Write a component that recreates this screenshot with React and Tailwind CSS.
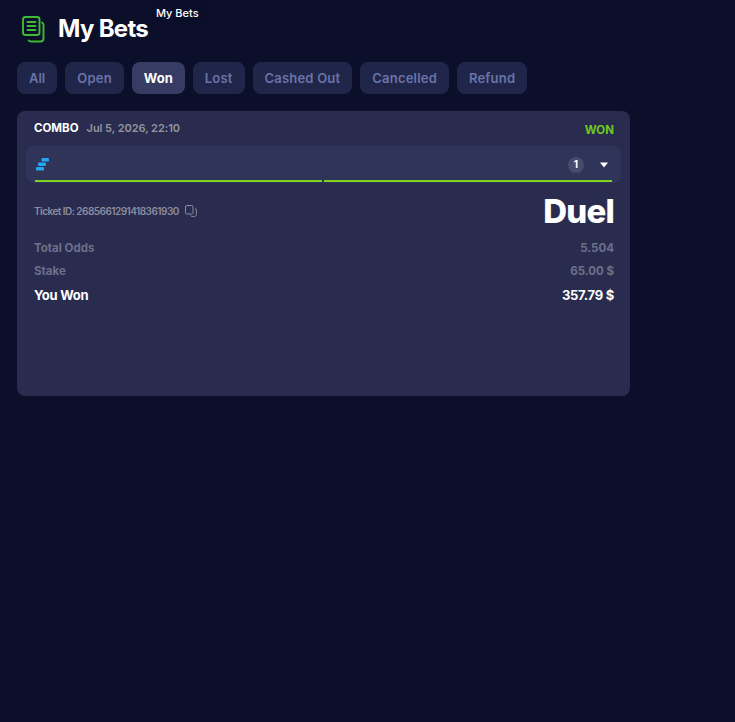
import React from "react";

const tabs = ["All", "Open", "Won", "Lost", "Cashed Out", "Cancelled", "Refund"];

function Tab({ label }) {
  const active = label === "Won";
  const all = label === "All";
  return (
    <div
      className={
        "h-8 px-3 flex items-center rounded-lg text-[13px] leading-none " +
        (active
          ? "bg-[#373c64] text-white font-bold"
          : all
          ? "bg-[#20254a] text-[#6a74a8] font-semibold"
          : "bg-[#20254a] text-[#6a74a8] font-semibold tracking-[0.2px]")
      }
    >
      {label}
    </div>
  );
}

export default function App() {
  return (
    <div className="relative min-h-[722px] bg-[#0b0f2a] pl-[17px] pt-[13px] font-['Inter',sans-serif] overflow-hidden">
      <div className="absolute left-[148px] top-0 h-[26px] w-[64px] pl-[8px] flex items-center bg-[#0a0e29] text-white text-[11px] font-medium leading-none whitespace-nowrap">
        My Bets
      </div>
      <div className="flex items-center h-8 pl-[4px] gap-[13px]">
        <svg width="24" height="28" viewBox="0 0 24 28" fill="none" stroke="#3dbb35" strokeWidth="1.9" strokeLinecap="round" strokeLinejoin="round">
          <rect x="2" y="2" width="16.5" height="18" rx="2.5" />
          <path d="M6.5 7h8M6.5 11h8M6.5 15h8" />
          <path d="M21 7.5c.8.4 1.5 1.2 1.5 2.5V23.5c0 1.7-1.3 3-3 3H10c-1 0-1.8-.3-2.3-1" />
        </svg>
        <h1 className="relative text-[24px] font-bold text-white leading-none tracking-[-0.7px]">My Bets</h1>
      </div>
      <div className="flex gap-2 mt-[17px]">
        {tabs.map((t) => (
          <Tab key={t} label={t} />
        ))}
      </div>
      <div className="mt-[17px] w-[613px] h-[285px] bg-[#292c4e] rounded-lg px-[9px] pt-[10px]">
        <div className="flex justify-between pl-2 pr-[7px] h-[25px]">
          <div className="flex items-start gap-2 leading-[14px] text-[11px]">
            <span className="font-bold text-white text-[11.5px]">COMBO</span>
            <span className="font-semibold text-[#95969f] tracking-[-0.05px]">Jul 5, 2026, 22:10</span>
          </div>
          <span className="text-[11.5px] font-bold text-[#6cc91f] mt-[2px] leading-[14px]">WON</span>
        </div>
        <div className="h-[37px] bg-[#313459] rounded-lg px-[9px] flex flex-col">
          <div className="flex-1 flex items-center justify-between pt-[3px]">
            <svg width="14" height="13" viewBox="0 0 14 13" fill="#22a6ee">
              <rect x="6.5" y="0" width="7.5" height="3.6" rx="1.2" />
              <rect x="3" y="4.4" width="8" height="3.6" rx="1.2" />
              <rect x="1" y="9" width="8" height="3.6" rx="1.2" />
            </svg>
            <div className="flex items-center gap-[16px]">
              <span className="w-4 h-4 rounded-full bg-[#484b6b] text-white text-[10px] font-bold flex items-center justify-center">1</span>
              <svg width="8" height="6" viewBox="0 0 8 6" fill="#fff" className="mr-[4px]">
                <path d="M0 0.5h8L4 5.5z" />
              </svg>
            </div>
          </div>
          <div className="flex gap-[2px] mb-[1px]">
            <div className="w-[287px] h-[2px] bg-[#7ed321]" />
            <div className="flex-1 h-[2px] bg-[#7ed321]" />
          </div>
        </div>
        <div className="flex items-center justify-between pl-2 pr-[7px] mt-[10px] h-[36px]">
          <div className="flex items-center gap-[6px] text-[10px] font-semibold text-[#8b8c9f] tracking-[-0.53px]">
            <span>Ticket ID: 2685661291418361930</span>
            <svg width="12" height="12" viewBox="0 0 12 12" fill="none" stroke="#8b8c9f" strokeWidth="1">
              <rect x="0.5" y="0.5" width="7.5" height="8.5" rx="1.5" />
              <path d="M10 3.5c.9.2 1.4.8 1.4 1.6v4.4c0 1.1-.8 1.9-1.9 1.9H7c-.7 0-1.2-.3-1.5-.8" />
            </svg>
          </div>
          <span className="text-[33px] font-extrabold text-white leading-none tracking-[-0.8px] pt-[1px]">Duel</span>
        </div>
        <div className="pl-2 pr-[7px] mt-[8px] flex flex-col text-[11.5px] font-bold text-[#6e6f8b]">
          <div className="flex justify-between h-[23px] items-center"><span>Total Odds</span><span>5.504</span></div>
          <div className="flex justify-between h-[23px] items-center"><span>Stake</span><span>65.00 $</span></div>
          <div className="flex justify-between h-[25px] items-center text-[13px] font-bold text-white tracking-[-0.25px]"><span>You Won</span><span>357.79 $</span></div>
        </div>
      </div>
    </div>
  );
}
